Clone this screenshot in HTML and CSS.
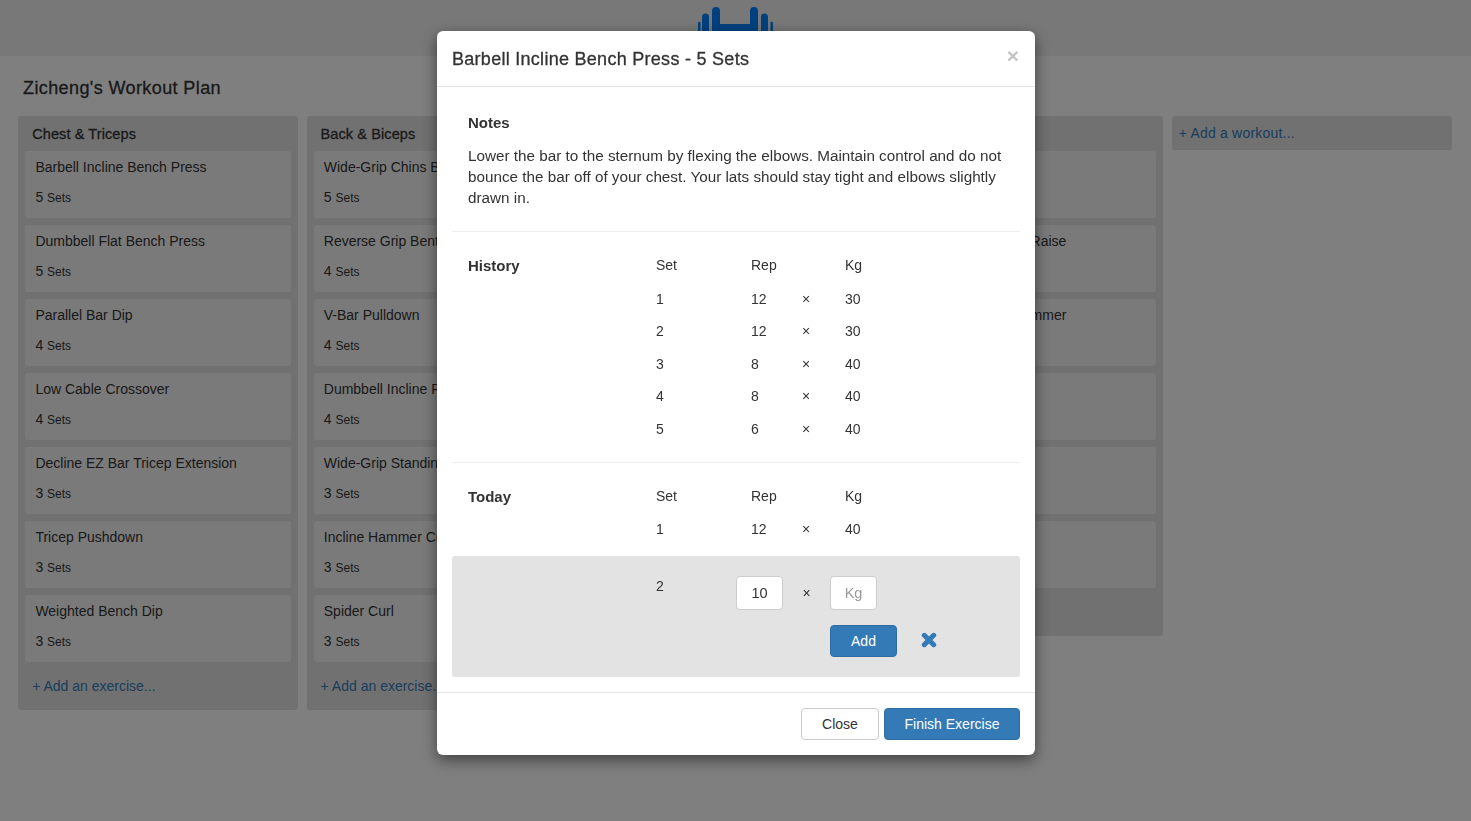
FILE: index.html
```html
<!DOCTYPE html>
<html>
<head>
    <title>Zicheng's Workout Plan</title>
    <link rel="stylesheet" href="styles.css">
</head>
<body>
    <header class="topbar">
        <svg class="logo" width="75" height="40" viewBox="0 0 75 40">
            <path d="M0 16a1.250 1.250 0 0 1 2.500 0V40H0zM4 10a3.500 3.500 0 0 1 7 0V40H4zM14 4a4 4 0 0 1 8 0v13h30V4a4 4 0 0 1 8 0v36H14zM63 10a3.500 3.500 0 0 1 7 0V40h-7zM72.500 16a1.250 1.250 0 0 1 2.500 0V40h-2.500z"/>
        </svg>
    </header>

    <h3 class="plan-title">Zicheng's Workout Plan</h3>

    <div class="board">
        <section class="list">
            <h4 class="list-title">Chest &amp; Triceps</h4>
            <div class="card"><div class="card-name">Barbell Incline Bench Press</div><div class="card-sets">5 <small>Sets</small></div></div>
            <div class="card"><div class="card-name">Dumbbell Flat Bench Press</div><div class="card-sets">5 <small>Sets</small></div></div>
            <div class="card"><div class="card-name">Parallel Bar Dip</div><div class="card-sets">4 <small>Sets</small></div></div>
            <div class="card"><div class="card-name">Low Cable Crossover</div><div class="card-sets">4 <small>Sets</small></div></div>
            <div class="card"><div class="card-name">Decline EZ Bar Tricep Extension</div><div class="card-sets">3 <small>Sets</small></div></div>
            <div class="card"><div class="card-name">Tricep Pushdown</div><div class="card-sets">3 <small>Sets</small></div></div>
            <div class="card"><div class="card-name">Weighted Bench Dip</div><div class="card-sets">3 <small>Sets</small></div></div>
            <a class="add-link" href="#">+ Add an exercise...</a>
        </section>
        <section class="list">
            <h4 class="list-title">Back &amp; Biceps</h4>
            <div class="card"><div class="card-name clipped">Wide-Grip Chins B</div><div class="card-sets">5 <small>Sets</small></div></div>
            <div class="card"><div class="card-name clipped">Reverse Grip Bent</div><div class="card-sets">4 <small>Sets</small></div></div>
            <div class="card"><div class="card-name">V-Bar Pulldown</div><div class="card-sets">4 <small>Sets</small></div></div>
            <div class="card"><div class="card-name clipped">Dumbbell Incline R</div><div class="card-sets">4 <small>Sets</small></div></div>
            <div class="card"><div class="card-name clipped">Wide-Grip Standing</div><div class="card-sets">3 <small>Sets</small></div></div>
            <div class="card"><div class="card-name clipped">Incline Hammer Cu</div><div class="card-sets">3 <small>Sets</small></div></div>
            <div class="card"><div class="card-name">Spider Curl</div><div class="card-sets">3 <small>Sets</small></div></div>
            <a class="add-link" href="#">+ Add an exercise...</a>
        </section>
        <!-- third list sits fully behind the modal -->
        <section class="list"></section>
        <section class="list">
            <div class="list-title list-title-empty"></div>
            <div class="card"></div>
            <div class="card card-tail"><div class="card-name">Raise</div></div>
            <div class="card card-tail"><div class="card-name">mmer</div></div>
            <div class="card"></div>
            <div class="card"></div>
            <div class="card"></div>
            <div class="add-link add-link-empty"></div>
        </section>
        <section class="list add-workout">
            <a class="add-link" href="#">+ Add a workout...</a>
        </section>
    </div>

    <div class="backdrop"></div>

    <div class="modal-wrap">
        <div class="modal">
            <div class="modal-header">
                <h4 class="modal-title">Barbell Incline Bench Press - 5 Sets</h4>
                <span class="modal-close">×</span>
            </div>
            <div class="modal-body">
                <div class="section notes">
                    <div class="section-label">Notes</div>
                    <p>Lower the bar to the sternum by flexing the elbows. Maintain control and do not bounce the bar off of your chest. Your lats should stay tight and elbows slightly drawn in.</p>
                </div>
                <div class="section history">
                    <div class="set-grid">
                        <div class="section-label">History</div><div>Set</div><div>Rep</div><div></div><div>Kg</div>
                        <div></div><div>1</div><div>12</div><div class="times">×</div><div>30</div>
                        <div></div><div>2</div><div>12</div><div class="times">×</div><div>30</div>
                        <div></div><div>3</div><div>8</div><div class="times">×</div><div>40</div>
                        <div></div><div>4</div><div>8</div><div class="times">×</div><div>40</div>
                        <div></div><div>5</div><div>6</div><div class="times">×</div><div>40</div>
                    </div>
                </div>
                <div class="section today">
                    <div class="set-grid">
                        <div class="section-label">Today</div><div>Set</div><div>Rep</div><div></div><div>Kg</div>
                        <div></div><div>1</div><div>12</div><div class="times">×</div><div>40</div>
                    </div>
                </div>
                <div class="new-set">
                    <div class="new-set-num">2</div>
                    <div class="new-set-fields">
                        <div class="new-set-row">
                            <input class="set-input" type="text" value="10">
                            <span class="times">×</span>
                            <input class="set-input" type="text" placeholder="Kg">
                        </div>
                        <div class="new-set-actions">
                            <button class="btn btn-primary btn-add">Add</button>
                            <svg class="cancel-icon" width="16" height="16" viewBox="0 0 16 16">
                                <path d="M3.300 3.300 12.700 12.700M12.700 3.300 3.300 12.700"/>
                            </svg>
                        </div>
                    </div>
                </div>
            </div>
            <div class="modal-footer">
                <button class="btn btn-default">Close</button>
                <button class="btn btn-primary btn-finish">Finish Exercise</button>
            </div>
        </div>
    </div>
</body>
</html>
```

FILE: styles.css
```css
html, body {
    height: 100%;
}

body {
    margin: 0;
    overflow: hidden;
    background-color: #fff;
    color: #333;
    font-family: "Liberation Sans", Arial, sans-serif;
    font-size: 14px;
    line-height: 20px;
}

.topbar {
    display: flex;
    justify-content: center;
    align-items: flex-start;
    height: 56px;
    box-sizing: border-box;
    background-color: #f0f0f0;
    overflow: hidden;
}

.logo {
    margin-top: 7px;
    fill: #0080ff;
}

.plan-title {
    margin: 21px 0 17px 23px;
    font-size: 18px;
    line-height: 22px;
    font-weight: normal;
    letter-spacing: 0.4px;
    -webkit-text-stroke: 0.3px;
}

.board {
    display: flex;
    align-items: flex-start;
    gap: 8.4px;
    padding-left: 18.2px;
}

.list {
    flex: 0 0 280px;
    padding: 0 7px;
    box-sizing: border-box;
    background-color: #e3e3e3;
    border-radius: 3px;
}

.list-title {
    margin: 0;
    padding: 8px 7px 7px;
    font-size: 14.5px;
    line-height: 20px;
    font-weight: normal;
    letter-spacing: 0.1px;
    -webkit-text-stroke: 0.3px;
}

.list-title-empty {
    height: 20px;
}

.card {
    height: 67px;
    margin-bottom: 7px;
    padding: 6px 10.2px;
    box-sizing: border-box;
    background-color: #f5f5f5;
    border-radius: 3px;
}

.card-tail {
    text-align: right;
    padding-right: 90px;
}

.card-sets {
    margin-top: 10px;
}

.card-sets small {
    font-size: 12px;
}

.clipped {
    white-space: nowrap;
}

.add-link {
    display: block;
    padding: 7px 7px 14px;
    color: #337ab7;
    text-decoration: none;
}

.add-link-empty {
    height: 20px;
}

.add-workout .add-link {
    padding: 7px 0;
    letter-spacing: 0.2px;
}

.backdrop {
    position: fixed;
    top: 0;
    left: 0;
    right: 0;
    bottom: 0;
    background-color: rgba(0, 0, 0, 0.5);
}

.modal-wrap {
    position: fixed;
    top: 31px;
    left: 437px;
}

.modal {
    width: 598px;
    height: 724px;
    display: flex;
    flex-direction: column;
    background-color: #fff;
    border-radius: 6px;
    box-shadow: 0 5px 15px rgba(0, 0, 0, 0.5);
}

.modal-header {
    display: flex;
    justify-content: space-between;
    align-items: center;
    height: 56px;
    padding: 0 15px;
    box-sizing: border-box;
    border-bottom: 1px solid #e5e5e5;
}

.modal-title {
    margin: 0;
    font-size: 18px;
    font-weight: normal;
    letter-spacing: 0.28px;
    -webkit-text-stroke: 0.3px;
}

.modal-close {
    margin: -6px 1px 0 0;
    color: #c4c4c4;
    font-size: 21px;
    font-weight: bold;
}

.modal-body {
    flex: 1;
    padding: 0 15px;
}

.section {
    padding: 0 16px;
    border-bottom: 1px solid #eee;
}

.section-label {
    font-size: 15px;
    font-weight: bold;
}

.set-grid .section-label {
    margin: 1px 0 -1px;
}

.notes {
    height: 145px;
    padding-top: 26px;
    box-sizing: border-box;
}

.notes p {
    margin: 12px 0 0;
    font-size: 15.25px;
    line-height: 21px;
}

.history {
    height: 231px;
    padding-top: 23px;
    box-sizing: border-box;
}

.history .set-grid {
    grid-template-rows: 21px;
}

.today {
    height: 93px;
    padding-top: 23px;
    box-sizing: border-box;
    border-bottom: none;
}

.set-grid {
    display: grid;
    grid-template-columns: 188px 95px 51px 43px 1fr;
    row-gap: 12.5px;
}

.times {
    font-size: 14px;
}

.new-set {
    display: flex;
    height: 121px;
    padding: 20px 0 0 204px;
    box-sizing: border-box;
    background-color: #e3e3e3;
    border-radius: 3px;
}

.new-set-num {
    width: 80px;
}

.new-set-row {
    display: flex;
    align-items: center;
}

.new-set-row .times {
    width: 47px;
    text-align: center;
}

.set-input {
    width: 47px;
    height: 34px;
    padding: 0;
    box-sizing: border-box;
    border: 1px solid #ccc;
    border-radius: 4px;
    background-color: #fff;
    color: #333;
    font-family: inherit;
    font-size: 14.5px;
    text-align: center;
}

.set-input::placeholder {
    color: #999;
}

.new-set-actions {
    display: flex;
    align-items: center;
    margin: 15px 0 0 94px;
}

.btn {
    height: 32px;
    padding: 0;
    border: 1px solid transparent;
    border-radius: 4px;
    font-family: inherit;
    font-size: 14px;
}

.btn-primary {
    background-color: #337ab7;
    border-color: #2e6da4;
    color: #fff;
}

.btn-default {
    width: 78px;
    background-color: #fff;
    border-color: #ccc;
    color: #333;
}

.btn-add {
    width: 67px;
}

.btn-finish {
    width: 136px;
}

.cancel-icon {
    margin: -2px 0 0 24px;
    fill: none;
    stroke: #337ab7;
    stroke-width: 5;
    stroke-linecap: round;
}

.modal-footer {
    display: flex;
    justify-content: flex-end;
    gap: 5px;
    height: 63px;
    padding: 15px 15px 0;
    box-sizing: border-box;
    border-top: 1px solid #e5e5e5;
}
```
